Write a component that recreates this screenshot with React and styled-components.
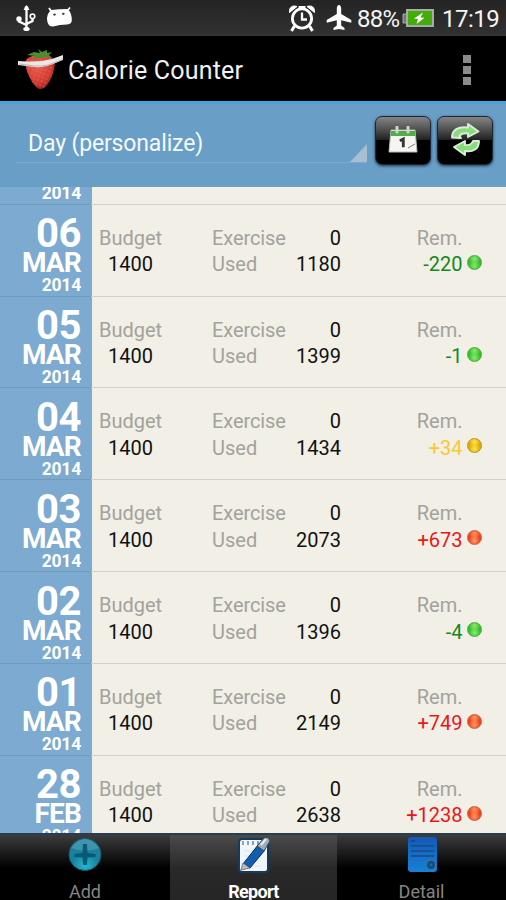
import React from 'react';
import styled, { createGlobalStyle } from 'styled-components';

const Global = createGlobalStyle`
  * { box-sizing: border-box; }
  body { margin: 0; background: #000; font-family: Roboto, sans-serif; }
`;

const Screen = styled.main`
  width: 506px; height: 900px; overflow: hidden;
  display: flex; flex-direction: column; background: #000;
`;

const StatusBar = styled.header`
  height: 36px; flex: none; padding: 0 8px 0 15px;
  display: flex; align-items: center;
  background: linear-gradient(#242424, #303030 90%, #343434);
  color: #f4f4f4; font-size: 24px; line-height: 36px; white-space: nowrap;
  svg { display: block; flex: none; }
`;
const Spacer = styled.div`flex: 1;`;
const StatusText = styled.span`
  width: ${p => p.$w}px; margin-left: ${p => p.$gap}px; letter-spacing: ${p => p.$ls}px;
  padding-top: 2px;
`;
const StatusIcon = styled.svg`margin-left: ${p => p.$gap || 0}px;`;

const ActionBar = styled.div`
  height: 65px; flex: none; display: flex; align-items: center; padding: 3px 35px 0 17px;
`;
const Title = styled.h1`
  margin: 0 0 0 3px; flex: 1; color: #f1f1f1; font-size: 25px; font-weight: 400; letter-spacing: 0.2px;
`;
const Overflow = styled.div`
  display: grid; gap: 3px; margin-top: -1px;
  i { width: 8px; height: 8px; background: #8b8b8b; }
`;

const FilterBar = styled.section`
  height: 86px; flex: none; display: flex; align-items: flex-start;
  padding: 12px 13px 0 15px; background: #699ec7; border-top: 3px solid #42a5d8;
`;
const Picker = styled.div`
  flex: 1; height: 47px; display: flex; align-items: flex-end; justify-content: space-between;
  border-bottom: 1px solid #7caace; margin-right: 8px;
`;
const PickerText = styled.span`
  color: #f4f9fd; font-size: 23px; line-height: 30px; padding: 0 0 3px 13px; letter-spacing: -0.15px;
`;
const Corner = styled.i`
  width: 17px; height: 18px; background: #a7bed3; clip-path: polygon(100% 0, 100% 100%, 0 100%);
`;
const ToolButton = styled.button`
  width: 56px; height: 49px; margin: 0 0 0 ${p => p.$gap || 0}px; padding: 0 0 2px;
  border: 1px solid #1b2733; border-radius: 7px;
  background: linear-gradient(#858585 0%, #555 24%, #202020 49%, #000 50%, #000);
  box-shadow: 0 1px 3px #1b354b; display: grid; place-items: center;
`;

const List = styled.section`
  height: 646px; flex: none; overflow: hidden; display: flex; flex-direction: column;
  background: linear-gradient(90deg, #7caad0 92px, #f1efe6 92px);
`;
const Row = styled.article`
  height: 91.85px; flex: none; display: flex;
  border-top: 1px solid; border-image: linear-gradient(90deg, #719dbd 92px, #d3d2c9 92px) 1;
`;
const DateCell = styled.div`
  width: 92px; flex: none; padding: 14.5px 11px 0 0; color: #fff; font-weight: 700; text-align: right;
`;
const DayNumber = styled.div`font-size: 40px; line-height: 30px; letter-spacing: -0.5px;`;
const Month = styled.div`font-size: 28px; line-height: 28px; letter-spacing: -0.8px;`;
const Year = styled.div`font-size: 17.5px; line-height: 16px; letter-spacing: -0.2px;`;
const ScrolledRow = styled.div`
  height: 16.7px; flex: none; width: 92px; padding-right: 11px; color: #fff;
  font-weight: 700; text-align: right;
  ${Year} { margin-top: -2px; }
`;

const Cell = styled.div`
  width: ${p => p.$w}px; margin-left: ${p => p.$gap}px; flex: none; padding-top: 20px;
  text-align: ${p => p.$align || 'left'}; font-size: 20px; line-height: 26.5px; white-space: nowrap;
`;
const Label = styled.div`color: #a3a29c; letter-spacing: ${p => p.$ls || 0}px;`;
const Value = styled.div`color: ${p => p.$color || '#111'}; padding-left: ${p => p.$indent || 0}px;`;
const Lamp = styled.i`
  width: 15px; height: 15px; flex: none; margin: 50px 0 0 4px; border-radius: 50%;
  border: 1px solid ${p => p.$c[2]};
  background: radial-gradient(circle at 50% 75%, ${p => p.$c[0]}, transparent 50%),
    radial-gradient(circle at 50% 22%, ${p => p.$c[0]}, ${p => p.$c[1]} 48%, ${p => p.$c[1]});
`;

const Tabs = styled.nav`
  height: 67px; flex: none; display: grid; grid-template-columns: 170px 167px 169px;
  border-top: 2px solid #283e50;
`;
const Tab = styled.div`
  display: flex; flex-direction: column; align-items: center; padding-top: 1px;
  background: ${p => (p.$active
    ? 'linear-gradient(#4b4b4b, #292929 48%, #252525)'
    : 'linear-gradient(#3c3c3c, #000 48%)')};
  color: ${p => (p.$active ? '#fff' : '#858585')};
  svg { display: block; flex: none; height: 38px; }
`;
const TabLabel = styled.span`
  margin-top: 6px; font-size: 18px; line-height: 24px;
  font-weight: ${p => (p.$active ? 700 : 400)}; letter-spacing: ${p => (p.$active ? -0.7 : 0)}px;
`;

const GREEN = '#16881b';
const AMBER = '#f8c933';
const RED = '#eb1717';
const LAMPS = {
  [GREEN]: ['#8bed72', '#31bd27', '#54a846'],
  [AMBER]: ['#ffe653', '#dea900', '#b7942f'],
  [RED]: ['#ff9e68', '#ee3e18', '#cc6044'],
};
const days = [
  { day: '06', month: 'MAR', used: 1180, rem: '-220', color: GREEN },
  { day: '05', month: 'MAR', used: 1399, rem: '-1', color: GREEN },
  { day: '04', month: 'MAR', used: 1434, rem: '+34', color: AMBER },
  { day: '03', month: 'MAR', used: 2073, rem: '+673', color: RED },
  { day: '02', month: 'MAR', used: 1396, rem: '-4', color: GREEN },
  { day: '01', month: 'MAR', used: 2149, rem: '+749', color: RED },
  { day: '28', month: 'FEB', used: 2638, rem: '+1238', color: RED },
];

const Usb = () => (
  <StatusIcon width="23" height="28" viewBox="0 0 23 28" fill="none" stroke="#fff" strokeWidth="2.3">
    <path d="M11.5 4v22M11.5 21L4 17.5V15M11.5 20l6-3v-2" />
    <circle cx="11.5" cy="4" r="2" fill="#fff" stroke="none" />
    <path d="M8.5 6L11.5 1l3 5z" fill="#fff" stroke="none" />
    <circle cx="4" cy="15" r="2.7" fill="#fff" stroke="none" />
    <circle cx="17.5" cy="12.3" r="2.3" strokeWidth="1.6" />
    <ellipse cx="11.5" cy="25" rx="3.2" ry="2" fill="#fff" stroke="none" />
  </StatusIcon>
);
const Droid = () => (
  <StatusIcon $gap={8} width="28" height="24" viewBox="0 0 28 24">
    <path d="M5 5L3 2M22 4L24 1.5" stroke="#fff" strokeWidth="1.8" />
    <path d="M5 4Q13 3 22 3Q26 8 25.8 14Q26 18 21 18.5Q14 18.5 7 20.5Q2 20.5 1.2 15Q0 9 5 4Z" fill="#fff" />
    <ellipse cx="8.5" cy="8.6" rx="1.4" ry="1.1" fill="#444" /><ellipse cx="17.3" cy="7.8" rx="1.4" ry="1.1" fill="#444" />
  </StatusIcon>
);
const Alarm = () => (
  <StatusIcon width="28" height="28" viewBox="0 0 27 28" fill="none" stroke="#fff" strokeWidth="2.8">
    <circle cx="13.5" cy="14.5" r="9.6" /><path d="M13.5 8.5v7h5" strokeWidth="2.3" />
    <path d="M6 22l-3 5M21 22l3 5M10 3.5h7" strokeWidth="3" />
    <path d="M1 8.5C.5 3 4 1 8.5 2.5zM26 8.5C26.5 3 23 1 18.5 2.5z" fill="#fff" stroke="#fff" strokeWidth="1" />
  </StatusIcon>
);
const Plane = () => (
  <StatusIcon $gap={10} width="26" height="26" viewBox="0 0 26 26">
    <path d="M13 0C11.5 0 10.8 2 10.8 4v5L.7 15v2.7l10.1-2.5v5.2L7.5 23v2l5.5-1 5.5 1v-2l-3.3-2.6v-5.2l10.1 2.5V15L15.2 9V4c0-2-.7-4-2.2-4z" fill="#fff" />
  </StatusIcon>
);
const Battery = () => (
  <StatusIcon $gap={3} width="33" height="19" viewBox="0 0 33 19">
    <path d="M5 5H1v9h4" fill="#777" stroke="#aaa" />
    <rect x="5" y="1" width="26" height="16" fill="#43ad08" stroke="#aaa" strokeWidth="2" />
    <path d="M21 3.5l-9 6 4 .5-1.5 5 8-6.2-4-.4z" fill="#fff" />
  </StatusIcon>
);
const Strawberry = () => (
  <svg width="48" height="42" viewBox="0 0 48 42">
    <defs>
      <radialGradient id="berry" cx=".4" cy=".35" r=".7"><stop stopColor="#e9584b" /><stop offset=".65" stopColor="#d23c34" /><stop offset="1" stopColor="#94201a" /></radialGradient>
      <pattern id="seeds" width="4" height="4" patternUnits="userSpaceOnUse" patternTransform="rotate(20)"><ellipse cx="2" cy="2" rx=".5" ry=".7" fill="#f58b77" /></pattern>
    </defs>
    <path d="M9 11Q13 6 24 6Q35 6 38 12Q38 20 34 29Q29 40 24 40Q19 40 14 31Q7 18 9 11Z" fill="url(#berry)" />
    <path d="M9 11Q13 6 24 6Q35 6 38 12Q38 20 34 29Q29 40 24 40Q19 40 14 31Q7 18 9 11Z" fill="url(#seeds)" />
    <path d="M23 4L21 0l4 3 5-2v3l5-1-3 3 3 3-7-1-5 1-7 1 2-3-8-1 7-3z" fill="#4b8e2e" />
    <path d="M1 12l10 .5Q23 13 35 10L46 6v5L36 15Q25 20 9 17l-8-1z" fill="#e9e7e7" />
    <path d="M2 15l8 1q15 3 27-2l9-4" fill="none" stroke="#b9b4b4" strokeWidth="1" />
  </svg>
);
const CalendarIcon = () => (
  <svg width="30" height="28" viewBox="0 0 30 28">
    <path d="M3 4h24l2 22H1z" fill="#f5f5f2" stroke="#b8bcb8" />
    <path d="M3 5h24l.5 5h-25z" fill="#52ac47" />
    <path d="M9 1v5M20 1v5" stroke="#cfd4cf" strokeWidth="3" strokeLinecap="round" />
    <path d="M11.8 14.8l3.5-1.7v8.2" stroke="#343434" strokeWidth="2.8" fill="none" />
    <path d="M20 22l7-4" stroke="#777" />
  </svg>
);
const RefreshIcon = () => (
  <svg width="31" height="33" viewBox="0 0 31 33" fill="#83df76" stroke="#dcebdc" strokeWidth="1.9" strokeLinejoin="round">
    <path d="M2 14.5C2 7 8 3 18 4.5V1l10.5 7.5L18 14v-3.5Q12 9.5 9.5 13L11 15z" />
    <path d="M29 18C29 26 23 29.5 15 28v4L4 24l11-6v4q6 1 8-4z" />
  </svg>
);
const AddIcon = () => (
  <svg width="36" height="38" viewBox="0 0 36 38">
    <defs><radialGradient id="globe" cx=".5" cy=".85" r=".85"><stop stopColor="#25b9d1" /><stop offset=".5" stopColor="#17819d" /><stop offset="1" stopColor="#2c809a" /></radialGradient></defs>
    <circle cx="18" cy="18.5" r="16" fill="url(#globe)" stroke="#145c73" />
    <path d="M4 12Q18-6 32 12Q18 17 4 12z" fill="#64b6c9" opacity=".4" />
    <path d="M16 8h4l.5 9 8 1v3l-8 .5L20 29h-4l-.5-7.500-8-.5v-3l8-1z" fill="#07506d" opacity=".85" />
  </svg>
);
const ReportIcon = () => (
  <svg width="36" height="38" viewBox="0 0 36 38">
    <rect x="3" y="3" width="29" height="33" rx="3" fill="#f1f6fb" stroke="#123b60" strokeWidth="2" />
    <path d="M7 5v4M12 5v4M17 5v4M22 5v4" stroke="#8b98a3" strokeWidth="1.8" />
    <path d="M8 15h17M8 20h17M8 25h17M8 30h17" stroke="#dce5ed" />
    <path d="M7 28L22 9l7 5-15 18z" fill="#125eae" stroke="#092f5a" />
    <path d="M21 10l7-8q5-2 6 3l-6 10z" fill="#9faab4" stroke="#38434d" />
    <path d="M25 9l5-6" stroke="#e8eef2" strokeWidth="2" />
    <path d="M5 34l2-7 7 5z" fill="#b8bec5" stroke="#4b5966" strokeWidth=".7" />
  </svg>
);
const DetailIcon = () => (
  <svg width="34" height="38" viewBox="0 0 34 38">
    <defs><linearGradient id="page" x2="0" y2="1"><stop stopColor="#1459b6" /><stop offset="1" stopColor="#1782d4" /></linearGradient></defs>
    <rect x="3" y="1" width="29" height="35" rx="3" fill="url(#page)" />
    <path d="M6 10h23M6 15h23M6 20h23" stroke="#1a4888" strokeWidth="1.5" />
    <path d="M6 5h4" stroke="#1a4888" strokeWidth="2" /><circle cx="26" cy="29" r="2.7" fill="#176cab" stroke="#244968" strokeWidth="2.5" />
  </svg>
);

function DayRow({ item }) {
  return (
    <Row>
      <DateCell><DayNumber>{item.day}</DayNumber><Month>{item.month}</Month><Year>2014</Year></DateCell>
      <Cell $w={62} $gap={7}><Label>Budget</Label><Value $indent={9}>1400</Value></Cell>
      <Cell $w={74} $gap={51}><Label $ls={-0.1}>Exercise</Label><Label>Used</Label></Cell>
      <Cell $w={55} $gap={0} $align="right"><Value>0</Value><Value>{item.used}</Value></Cell>
      <Cell $w={121.5} $gap={0} $align="right"><Label>Rem.</Label><Value $color={item.color}>{item.rem}</Value></Cell>
      <Lamp $c={LAMPS[item.color]} />
    </Row>
  );
}

export default function App() {
  return (
    <>
      <Global />
      <Screen>
        <StatusBar>
          <Usb /><Droid /><Spacer /><Alarm /><Plane />
          <StatusText $w={42} $gap={5} $ls={-0.8}>88%</StatusText>
          <Battery />
          <StatusText $w={56} $gap={7} $ls={-0.5}>17:19</StatusText>
        </StatusBar>
        <ActionBar><Strawberry /><Title>Calorie Counter</Title><Overflow><i /><i /><i /></Overflow></ActionBar>
        <FilterBar>
          <Picker><PickerText>Day (personalize)</PickerText><Corner /></Picker>
          <ToolButton aria-label="Calendar"><CalendarIcon /></ToolButton>
          <ToolButton aria-label="Refresh" $gap={6}><RefreshIcon /></ToolButton>
        </FilterBar>
        <List>
          <ScrolledRow><Year>2014</Year></ScrolledRow>
          {days.map(item => <DayRow key={item.day} item={item} />)}
        </List>
        <Tabs>
          <Tab><AddIcon /><TabLabel>Add</TabLabel></Tab>
          <Tab $active><ReportIcon /><TabLabel $active>Report</TabLabel></Tab>
          <Tab><DetailIcon /><TabLabel>Detail</TabLabel></Tab>
        </Tabs>
      </Screen>
    </>
  );
}
